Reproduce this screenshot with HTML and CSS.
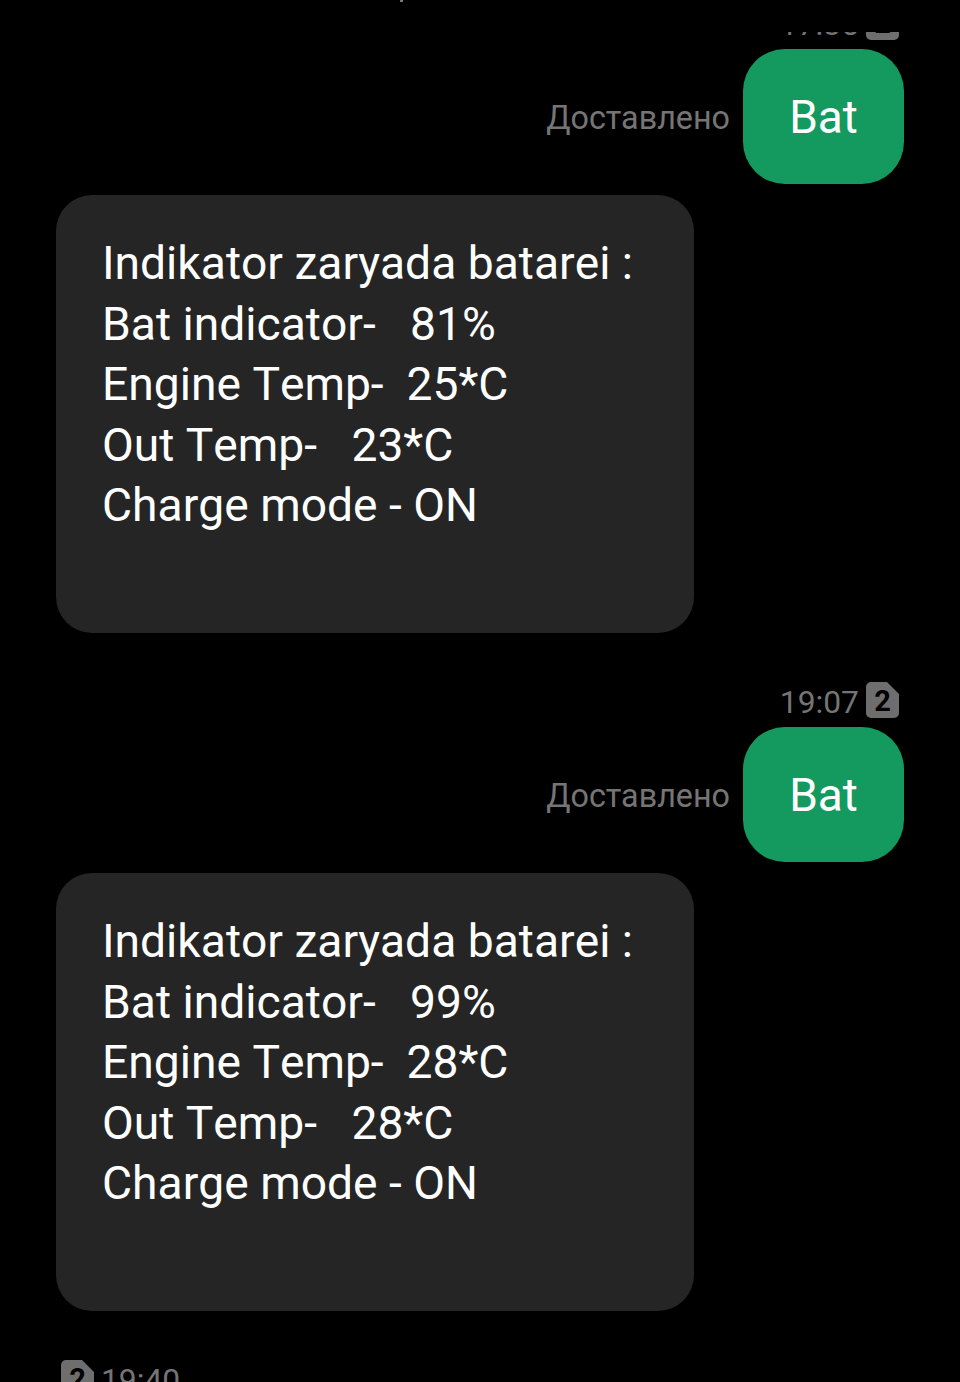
FILE: index.html
```html
<!DOCTYPE html>
<html lang="en">
<head>
    <meta charset="UTF-8">
    <meta name="viewport" content="width=device-width, initial-scale=1.0">
    <title>Bat</title>
    <link rel="stylesheet" href="styles.css">
</head>
<body>
    <div class="top-bar"><span class="top-dot"></span></div>
    <div class="thread">
        <div class="first-block">
            <div class="meta meta-out">
                <span class="time">17:35</span>
                <svg class="sim" viewBox="0 0 33 36"><path d="M5 0H21L33 12V31a5 5 0 0 1-5 5H5a5 5 0 0 1-5-5V5a5 5 0 0 1 5-5Z"/><text x="16.5" y="29" class="sim-num">2</text></svg>
            </div>
            <div class="row-out">
                <span class="status">Доставлено</span>
                <div class="bubble-out">Bat</div>
            </div>
            <div class="bubble-in">Indikator zaryada batarei :
Bat indicator-   81%
Engine Temp-  25*C
Out Temp-   23*C
Charge mode - ON</div>
        </div>
        <div class="block">
            <div class="meta meta-out">
                <span class="time">19:07</span>
                <svg class="sim" viewBox="0 0 33 36"><path d="M5 0H21L33 12V31a5 5 0 0 1-5 5H5a5 5 0 0 1-5-5V5a5 5 0 0 1 5-5Z"/><text x="16.5" y="29" class="sim-num">2</text></svg>
            </div>
            <div class="row-out">
                <span class="status">Доставлено</span>
                <div class="bubble-out">Bat</div>
            </div>
            <div class="bubble-in">Indikator zaryada batarei :
Bat indicator-   99%
Engine Temp-  28*C
Out Temp-   28*C
Charge mode - ON</div>
        </div>
        <div class="block">
            <div class="meta meta-in">
                <svg class="sim" viewBox="0 0 33 36"><path d="M5 0H21L33 12V31a5 5 0 0 1-5 5H5a5 5 0 0 1-5-5V5a5 5 0 0 1 5-5Z"/><text x="16.5" y="29" class="sim-num">2</text></svg>
                <span class="time">19:40</span>
            </div>
        </div>
    </div>
</body>
</html>
```

FILE: styles.css
```css
html, body {
    margin: 0;
    height: 100%;
    background-color: #000;
}

body {
    font-family: Roboto, "Liberation Sans", sans-serif;
    overflow: hidden;
}

.top-bar {
    position: relative;
    height: 32px;
}

.top-dot {
    position: absolute;
    left: 400px;
    top: 0;
    width: 3px;
    height: 2px;
    background-color: #777;
}

.thread {
    height: 1350px;
    overflow: hidden;
    padding: 0 56px;
}

.first-block {
    margin-top: -28px;
}

.block {
    margin-top: 49px;
}

.meta {
    display: flex;
    align-items: center;
    gap: 7px;
    height: 36px;
    margin-bottom: 9px;
    color: #757575;
    font-size: 31.8px;
}

.meta-out {
    justify-content: flex-end;
    padding-right: 5px;
}

.meta-in {
    padding-left: 5px;
}

.time {
    padding-top: 3px;
}

.sim {
    width: 33px;
    height: 36px;
    flex: none;
    fill: #6e6e6e;
}

.sim-num {
    font-family: Roboto, sans-serif;
    font-size: 29px;
    font-weight: 700;
    fill: #000;
    text-anchor: middle;
}

.row-out {
    display: flex;
    justify-content: flex-end;
    align-items: center;
    gap: 13px;
}

.status {
    padding-top: 3px;
    color: #757575;
    font-size: 32.3px;
}

.bubble-out {
    width: 161px;
    height: 135px;
    display: flex;
    justify-content: center;
    align-items: center;
    border-radius: 42px;
    background-color: #149a5f;
    color: #fff;
    font-size: 46px;
}

.bubble-in {
    width: 638px;
    height: 438px;
    box-sizing: border-box;
    margin-top: 11px;
    padding: 38px 46px;
    border-radius: 36px;
    background-color: #252525;
    color: #fff;
    font-size: 46.2px;
    font-kerning: none;
    line-height: 60.6px;
    white-space: pre-wrap;
}
```
